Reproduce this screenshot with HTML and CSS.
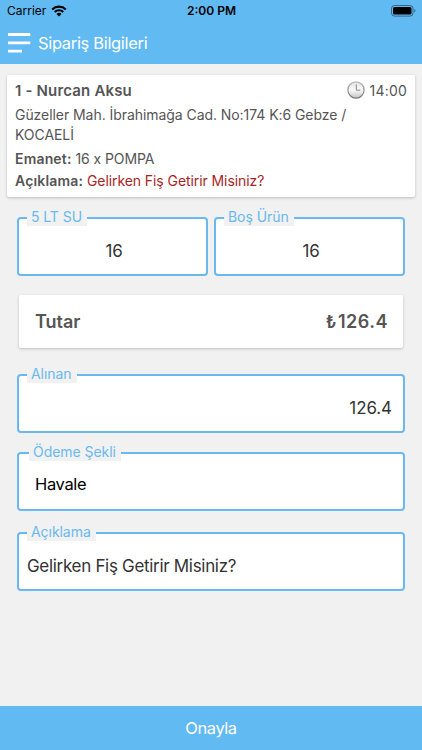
FILE: index.html
```html
<!DOCTYPE html>
<html lang="tr">
<head>
    <meta charset="UTF-8">
    <meta name="viewport" content="width=device-width, initial-scale=1.0">
    <title>Sipariş Bilgileri</title>
    <link rel="stylesheet" href="styles.css">
</head>
<body>

    <div class="header">
        <div class="status-bar">
            <div class="carrier">
                <span>Carrier</span>
                <svg class="wifi" viewBox="0 0 16 12" width="16" height="12">
                    <path d="M1.2 4.4a9.7 9.7 0 0 1 13.6 0" fill="none" stroke="#000" stroke-width="2.1"/>
                    <path d="M3.7 7a6.1 6.1 0 0 1 8.6 0" fill="none" stroke="#000" stroke-width="2"/>
                    <path d="M5.5 9a3.6 3.6 0 0 1 5 0L8 11.5z"/>
                </svg>
            </div>
            <div class="clock">2:00 PM</div>
            <div class="battery">
                <svg viewBox="0 0 25 12" width="25" height="12">
                    <rect x="0.5" y="0.5" width="21.5" height="10.6" rx="3" fill="none" stroke="#000" stroke-opacity="0.45"/>
                    <rect x="2" y="2" width="18.5" height="7.6" rx="1.5"/>
                    <path d="M23.3 4v3.6a2 2 0 0 0 0-3.6z" fill-opacity="0.5"/>
                </svg>
            </div>
        </div>
        <div class="nav">
            <button class="menu-button" aria-label="Menü">
                <svg viewBox="0 0 23 20" width="23" height="20">
                    <path d="M0 1.5h22.3M0 9.8h22.3M0 18.2h14" stroke="#fff" stroke-width="2.8"/>
                </svg>
            </button>
            <span class="title">Sipariş Bilgileri</span>
        </div>
    </div>

    <div class="content">
        <div class="card order">
            <div class="order-top">
                <span class="customer">1 - Nurcan Aksu</span>
                <span class="time">
                    <svg viewBox="0 0 18 18" width="18" height="18">
                        <defs>
                            <linearGradient id="face" x1="0" y1="0" x2="0" y2="1">
                                <stop offset="0" stop-color="#e2e2e2"/>
                                <stop offset="0.5" stop-color="#fafafa"/>
                                <stop offset="1" stop-color="#c4c4c4"/>
                            </linearGradient>
                            <linearGradient id="rim" x1="0" y1="0" x2="0" y2="1">
                                <stop offset="0" stop-color="#b5b5b5"/>
                                <stop offset="1" stop-color="#777"/>
                            </linearGradient>
                        </defs>
                        <circle cx="9" cy="9" r="8.1" fill="url(#face)" stroke="url(#rim)" stroke-width="1.2"/>
                        <path d="M9.3 3.5v5.7h4" fill="none" stroke="#888" stroke-width="1"/>
                    </svg>
                    <span class="hour">14:00</span>
                </span>
            </div>
            <div class="address">Güzeller Mah. İbrahimağa Cad. No:174 K:6 Gebze /<br>KOCAELİ</div>
            <div class="detail"><b>Emanet:</b> <span class="deposit">16 x POMPA</span></div>
            <div class="detail"><b>Açıklama:</b> <span class="note">Gelirken Fiş Getirir Misiniz?</span></div>
        </div>

        <div class="field-row">
            <div class="field center">
                <label for="water">5 LT SU</label>
                <input type="text" id="water" value="16">
            </div>
            <div class="field center">
                <label for="empty">Boş Ürün</label>
                <input type="text" id="empty" value="16">
            </div>
        </div>

        <div class="card total">
            <span>Tutar</span>
            <span class="amount"><span class="currency">₺</span>126.4</span>
        </div>

        <div class="form">
            <div class="field received">
                <label for="received">Alınan</label>
                <input type="text" id="received" value="126.4">
            </div>
            <div class="field payment">
                <label for="payment">Ödeme Şekli</label>
                <input type="text" id="payment" value="Havale">
            </div>
            <div class="field">
                <label for="description">Açıklama</label>
                <input type="text" id="description" value="Gelirken Fiş Getirir Misiniz?">
            </div>
        </div>
    </div>

    <button class="footer">Onayla</button>

</body>
</html>
```

FILE: styles.css
```css
* {
    box-sizing: border-box;
}
body {
    font-family: Inter, "Liberation Sans", sans-serif;
    margin: 0;
    height: 100vh;
    display: flex;
    flex-direction: column;
    background-color: #f1f1f1;
    color: #555;
    overflow: hidden;
}
button, input {
    font-family: inherit;
    border: none;
    padding: 0;
    margin: 0;
}
svg {
    display: block;
}
.header {
    height: 64px;
    background-color: #62baf3;
}
.status-bar {
    height: 21px;
    padding: 0 6px 0 7px;
    display: grid;
    grid-template-columns: 1fr auto 1fr;
    align-items: center;
    color: #000;
    font-size: 12px;
}
.carrier {
    display: flex;
    align-items: center;
    gap: 5px;
}
.clock {
    font-weight: 600;
}
.battery {
    justify-self: end;
}
.nav {
    height: 43px;
    padding-left: 8px;
    display: flex;
    align-items: center;
    gap: 7px;
}
.menu-button {
    background: none;
}
.title {
    color: #fff;
    font-size: 16.5px;
    letter-spacing: -0.33px;
}
.content {
    flex: 1;
    padding: 11px 7px 0;
}
.card {
    background-color: #fff;
    border-radius: 2px;
    box-shadow: 0 1px 3px rgba(0, 0, 0, 0.22);
}
.order {
    height: 122px;
    padding: 4px 8px;
    font-size: 14px;
}
.order-top {
    height: 22px;
    display: flex;
    align-items: center;
    justify-content: space-between;
}
.customer {
    font-size: 15px;
    font-weight: 600;
    letter-spacing: 0.17px;
}
.time {
    display: flex;
    align-items: center;
    gap: 5px;
}
.hour {
    letter-spacing: 0.2px;
}
.address {
    line-height: 20px;
    margin: 4px 0 3px;
    letter-spacing: -0.06px;
}
.detail {
    line-height: 22px;
    letter-spacing: -0.08px;
}
.detail b {
    font-weight: 600;
    letter-spacing: 0.17px;
}
.note {
    color: #a91f26;
}
.field-row {
    display: flex;
    gap: 6px;
    margin: 20px 10px 19px;
}
.field {
    position: relative;
    flex: 1;
    height: 59px;
    background-color: #fff;
    border: 2px solid #69b9ee;
    border-radius: 4px;
}
.field label {
    position: absolute;
    left: 8px;
    top: -11px;
    height: 18px;
    padding: 0 5px 0 4px;
    line-height: 17px;
    font-size: 14px;
    letter-spacing: -0.05px;
    color: #69b9ee;
    background-color: #f1f1f1;
}
.field input {
    width: 100%;
    height: 100%;
    padding: 9px 8px 0;
    background: none;
    color: #333;
    font-size: 17px;
    letter-spacing: -0.31px;
}
.center input {
    padding-left: 11px;
    text-align: center;
}
.total {
    height: 53px;
    margin: 0 12px 26px;
    padding: 0 15px 0 16px;
    display: flex;
    align-items: center;
    justify-content: space-between;
    font-size: 18px;
    font-weight: 600;
}
.amount {
    letter-spacing: 0.5px;
}
.currency {
    font-size: 17px;
    margin-right: 1px;
}
.form {
    margin: 0 10px;
    display: grid;
    gap: 21px;
}
.received {
    margin-bottom: -2px;
}
.received input {
    padding-right: 11px;
    text-align: right;
    letter-spacing: -0.1px;
}
.payment label {
    left: 10px;
}
.payment input {
    padding: 4px 16px 0;
    color: #000;
    font-size: 16.5px;
    letter-spacing: -0.35px;
}
.footer {
    height: 44px;
    background-color: #62baf3;
    color: #fff;
    font-size: 16.5px;
    letter-spacing: -0.45px;
}
```
